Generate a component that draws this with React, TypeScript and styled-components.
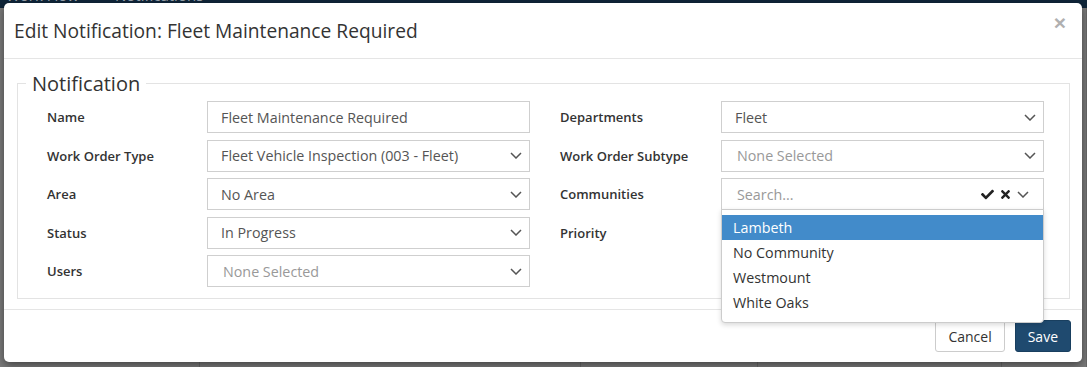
import styled, { createGlobalStyle } from "styled-components";
import { FaCheck, FaTimes } from "react-icons/fa";

const GlobalStyle = createGlobalStyle`
  html, body {
    margin: 0;
    padding: 0;
  }
  body {
    background: #7a7a7a;
    font-family: "Open Sans", "Liberation Sans", sans-serif;
    width: 1087px;
    height: 367px;
    overflow: hidden;
  }
  * {
    box-sizing: border-box;
  }
`;

const Page = styled.div`
  position: relative;
  width: 1087px;
  height: 367px;
  display: flex;
  flex-direction: column;
`;

const NavBar = styled.div`
  height: 8px;
  background: #0f2539;
  display: flex;
  gap: 36px;
  padding-left: 6px;
  overflow: hidden;
`;

const NavItem = styled.span`
  margin-top: -13px;
  font-size: 15px;
  line-height: 16px;
  color: #9aa4ae;
`;

const Backdrop = styled.div`
  flex: 1;
  display: flex;
`;

const BackCell = styled.div<{ $w?: number }>`
  width: ${(p) => (p.$w ? `${p.$w}px` : "auto")};
  flex: ${(p) => (p.$w ? "none" : "1")};
  border-right: 1px solid #686868;
`;

const Modal = styled.div`
  position: absolute;
  top: 3px;
  left: 4px;
  width: 1078px;
  height: 359px;
  background: #fff;
  border-radius: 5px;
  box-shadow: 0 3px 9px rgba(0, 0, 0, 0.45);
  display: flex;
  flex-direction: column;
`;

const Header = styled.div`
  height: 56px;
  border-bottom: 1px solid #e5e5e5;
  display: flex;
  align-items: center;
  justify-content: space-between;
  padding: 0 16px 0 10px;
`;

const Title = styled.h4`
  margin: 0;
  font-size: 19.2px;
  font-weight: 400;
  color: #333;
`;

const Close = styled.button`
  align-self: flex-start;
  margin-top: 9px;
  border: 0;
  background: none;
  padding: 0;
  font-family: "Liberation Sans", sans-serif;
  font-size: 21px;
  font-weight: 700;
  line-height: 1;
  color: #b0b0b0;
`;

const Body = styled.div`
  flex: 1;
  padding: 13px 12px 8px 13px;
`;

const Fieldset = styled.fieldset`
  margin: 0;
  min-width: 0;
  border: 1px solid #e3e3e3;
  padding: 6px 25px 11px 29px;
`;

const Legend = styled.legend`
  margin-left: -21px;
  padding: 0 6px;
  font-size: 20px;
  line-height: 23px;
  color: #333;
`;

const Columns = styled.div`
  display: grid;
  grid-template-columns: 483px 484px;
  column-gap: 30px;
`;

const Column = styled.div`
  display: flex;
  flex-direction: column;
  gap: 6.5px;
`;

const Row = styled.div`
  display: grid;
  grid-template-columns: 1fr 323px;
  align-items: center;
  height: 32px;
`;

const Label = styled.label`
  font-size: 13px;
  font-weight: 600;
  color: #333;
`;

const Control = styled.div<{ $placeholder?: boolean; $right?: number }>`
  position: relative;
  height: 32px;
  border: 1px solid #cfcfcf;
  background: #fff;
  display: flex;
  align-items: center;
  justify-content: space-between;
  padding: 0 ${(p) => p.$right ?? 7}px 0 ${(p) => (p.$placeholder ? 15 : 13)}px;
  font-size: 14.3px;
  color: ${(p) => (p.$placeholder ? "#999" : "#555")};
`;

const Icons = styled.div`
  display: flex;
  align-items: center;
  gap: 5px;
  color: #222;
`;

const Menu = styled.ul`
  position: absolute;
  top: 30px;
  left: -1px;
  right: -1px;
  z-index: 5;
  margin: 0;
  padding: 5px 0 7px;
  list-style: none;
  background: #fff;
  border: 1px solid #ccc;
  border-radius: 0 0 4px 4px;
  box-shadow: 0 2px 5px rgba(0, 0, 0, 0.15);
`;

const MenuItem = styled.li<{ $active?: boolean }>`
  height: 25px;
  line-height: 25px;
  padding-left: 11px;
  font-size: 14.3px;
  color: ${(p) => (p.$active ? "#fff" : "#333")};
  background: ${(p) => (p.$active ? "#428bca" : "transparent")};
`;

const Footer = styled.div`
  height: 53px;
  border-top: 1px solid #e5e5e5;
  display: flex;
  justify-content: flex-end;
  align-items: flex-start;
  gap: 10px;
  padding: 10px 11px 0 0;
`;

const Button = styled.button<{ $primary?: boolean }>`
  height: 32px;
  padding: 0 12px;
  font-family: "Open Sans", "Liberation Sans", sans-serif;
  font-size: 14px;
  border-radius: 3px;
  border: 1px solid ${(p) => (p.$primary ? "#193f5f" : "#ccc")};
  background: ${(p) => (p.$primary ? "#1f4a6f" : "#fff")};
  color: ${(p) => (p.$primary ? "#fff" : "#333")};
`;

function Chevron() {
  return (
    <svg width="12" height="7" viewBox="0 0 12 7" fill="none">
      <path d="M1 1l5 5 5-5" stroke="#555" strokeWidth="1.5" />
    </svg>
  );
}

type Field = { label: string; value?: string; placeholder?: string; select?: boolean };

const left: Field[] = [
  { label: "Name", value: "Fleet Maintenance Required" },
  { label: "Work Order Type", value: "Fleet Vehicle Inspection (003 - Fleet)", select: true },
  { label: "Area", value: "No Area", select: true },
  { label: "Status", value: "In Progress", select: true },
  { label: "Users", placeholder: "None Selected", select: true },
];

const communities = ["Lambeth", "No Community", "Westmount", "White Oaks"];

function FieldRow({ field }: { field: Field }) {
  return (
    <Row>
      <Label>{field.label}</Label>
      <Control $placeholder={!!field.placeholder}>
        <span>{field.value ?? field.placeholder}</span>
        {field.select && <Chevron />}
      </Control>
    </Row>
  );
}

export default function App() {
  return (
    <>
      <GlobalStyle />
      <Page>
        <NavBar>
          <NavItem>Work Flow</NavItem>
          <NavItem>Notifications</NavItem>
        </NavBar>
        <Backdrop>
          <BackCell $w={200} />
          <BackCell $w={381} />
          <BackCell $w={177} />
          <BackCell $w={244} />
          <BackCell />
        </Backdrop>

        <Modal>
          <Header>
            <Title>Edit Notification: Fleet Maintenance Required</Title>
            <Close>×</Close>
          </Header>
          <Body>
            <Fieldset>
              <Legend>Notification</Legend>
              <Columns>
                <Column>
                  {left.map((f) => (
                    <FieldRow key={f.label} field={f} />
                  ))}
                </Column>
                <Column>
                  <FieldRow field={{ label: "Departments", value: "Fleet", select: true }} />
                  <FieldRow
                    field={{ label: "Work Order Subtype", placeholder: "None Selected", select: true }}
                  />
                  <Row>
                    <Label>Communities</Label>
                    <Control $placeholder $right={14}>
                      <span>Search...</span>
                      <Icons>
                        <FaCheck size={13} />
                        <FaTimes size={13} />
                        <Chevron />
                      </Icons>
                      <Menu>
                        {communities.map((c, i) => (
                          <MenuItem key={c} $active={i === 0}>
                            {c}
                          </MenuItem>
                        ))}
                      </Menu>
                    </Control>
                  </Row>
                  <FieldRow field={{ label: "Priority", value: "", select: true }} />
                </Column>
              </Columns>
            </Fieldset>
          </Body>
          <Footer>
            <Button>Cancel</Button>
            <Button $primary>Save</Button>
          </Footer>
        </Modal>
      </Page>
    </>
  );
}
